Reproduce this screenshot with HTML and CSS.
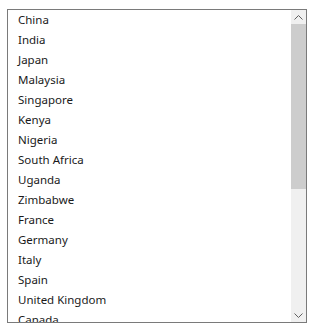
FILE: index.html
```html
<!DOCTYPE html>
<html lang="en">
<head>
  <meta charset="UTF-8" />
  <title>Countries</title>
  <link rel="stylesheet" href="styles.css">
</head>
<body>
  <div class="listbox">
    <ul class="items">
      <li>China</li>
      <li>India</li>
      <li>Japan</li>
      <li>Malaysia</li>
      <li>Singapore</li>
      <li>Kenya</li>
      <li>Nigeria</li>
      <li>South Africa</li>
      <li>Uganda</li>
      <li>Zimbabwe</li>
      <li>France</li>
      <li>Germany</li>
      <li>Italy</li>
      <li>Spain</li>
      <li>United Kingdom</li>
      <li>Canada</li>
    </ul>
    <div class="scrollbar">
      <div class="arrow">
        <svg width="9" height="5" viewBox="0 0 9 5"><path d="M0.5 4.5 L4.5 0.5 L8.5 4.5" fill="none" stroke="#606060" stroke-width="1"/></svg>
      </div>
      <div class="track">
        <div class="thumb"></div>
      </div>
      <div class="arrow">
        <svg width="9" height="5" viewBox="0 0 9 5"><path d="M0.5 0.5 L4.5 4.5 L8.5 0.5" fill="none" stroke="#606060" stroke-width="1"/></svg>
      </div>
    </div>
  </div>
</body>
</html>
```

FILE: styles.css
```css
body {
  margin: 0;
  padding: 9px 0 0 7px;
  background: #fff;
  font-family: 'Noto Sans', 'Open Sans', sans-serif;
}
.listbox {
  width: 300px;
  height: 314px;
  box-sizing: border-box;
  border: 1px solid #7a7a7a;
  display: flex;
  background: #fff;
}
.items {
  flex: 1;
  list-style: none;
  margin: 0;
  padding: 0;
  overflow: hidden;
}
.items li {
  height: 20px;
  line-height: 20px;
  padding-left: 10px;
  font-size: 11.5px;
  color: #1a1a1a;
}
.scrollbar {
  width: 15px;
  display: flex;
  flex-direction: column;
  background: #f0f0f0;
}
.arrow {
  height: 14px;
  display: flex;
  align-items: center;
  justify-content: center;
}
.track {
  flex: 1;
}
.thumb {
  height: 165px;
  background: #cdcdcd;
}
```
